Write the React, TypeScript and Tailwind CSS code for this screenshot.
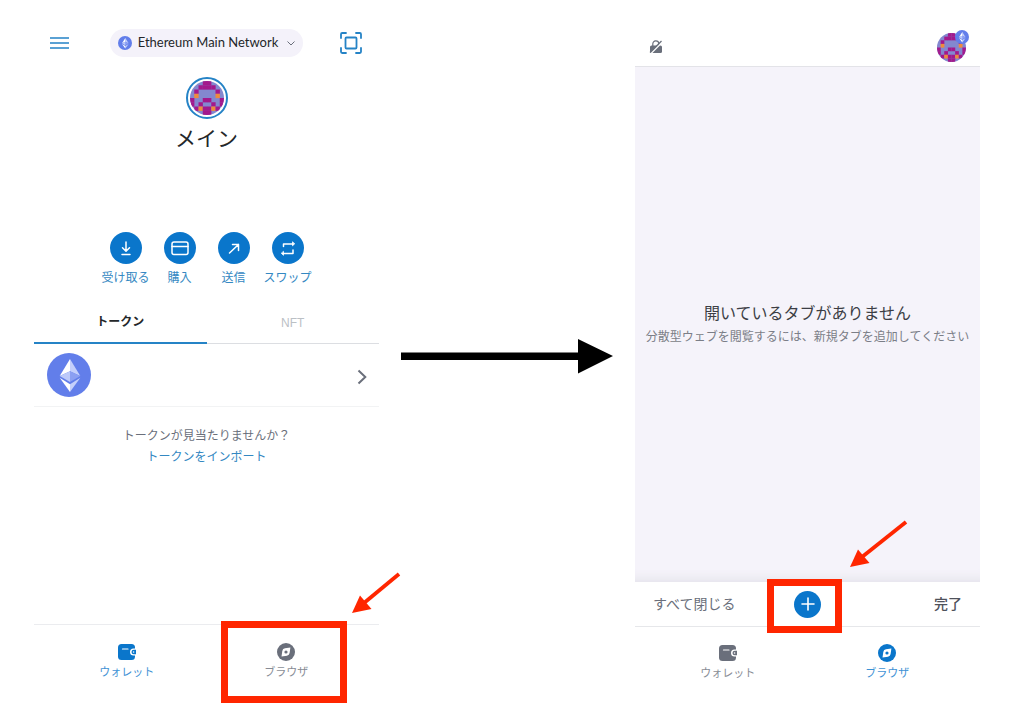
import type { ReactNode } from "react";

const AVATAR_ROWS = [
  "...mm...",
  "..mmmm..",
  ".m....m.",
  ".o....o.",
  "m..mm..m",
  "m.m..m.m",
  ".mommom.",
  "...mm...",
];

function Blockie({ className }: { className: string }) {
  return (
    <svg viewBox="0 0 8 8" className={className} aria-hidden="true">
      <rect width="8" height="8" fill="#8388cf" />
      {AVATAR_ROWS.flatMap((row, y) =>
        row.split("").map((cell, x) =>
          cell === "." ? null : (
            <rect key={`${x}-${y}`} x={x} y={y} width="1.03" height="1.03" fill={cell === "m" ? "#a3198c" : "#f08a3c"} />
          ),
        ),
      )}
    </svg>
  );
}

function EthLogo({ className }: { className: string }) {
  return (
    <svg viewBox="0 0 44 44" className={className} aria-hidden="true">
      <circle cx="22" cy="22" r="22" fill="#627eea" />
      <path d="M23 6v12.3l10.3 4.6z" fill="#c4cffb" />
      <path d="M23 6L12.7 22.9 23 18.3z" fill="#fff" />
      <path d="M23 18.3v10.8l10.3-6.2z" fill="#8b9ff2" />
      <path d="M12.7 22.9L23 29.1V18.3z" fill="#bcc9fa" />
      <path d="M23 31.2V39l10.3-14.2z" fill="#c4cffb" />
      <path d="M23 39v-7.8l-10.3-6.4z" fill="#fff" />
    </svg>
  );
}

function WalletIcon() {
  return (
    <svg viewBox="0 0 18 16" className="h-4 w-[18px]" aria-hidden="true">
      <rect width="17" height="16" rx="3.5" fill="currentColor" />
      <path d="M4.5 5h5.5" stroke="#fff" strokeWidth="1.2" strokeLinecap="round" />
      <path d="M18 4.4h-2.4a3.6 3.6 0 0 0 0 7.2H18z" fill="#fff" />
      <path d="M18 5.7h-2.200a2.300 2.300 0 0 0 0 4.600H18z" fill="currentColor" />
      <circle cx="15.600" cy="8" r="0.800" fill="#fff" />
    </svg>
  );
}

function CompassIcon() {
  return (
    <svg viewBox="0 0 18 18" className="size-[18px]" aria-hidden="true">
      <circle cx="9" cy="9" r="9" fill="currentColor" />
      <path d="M13.4 4.500L8 5.300A3.200 3.200 0 0 0 5.300 8l-.8 5.500 5.500-.8a3.200 3.200 0 0 0 2.600-2.700z" fill="#fff" />
      <circle cx="9" cy="9" r="1.600" fill="currentColor" />
    </svg>
  );
}

function RedArrow({ dx, dy, className }: { dx: number; dy: number; className: string }) {
  return (
    <svg width={dx + 2} height={dy + 2} viewBox={`0 0 ${dx + 2} ${dy + 2}`} className={className} aria-hidden="true">
      <path d={`M12 ${dy - 9}L${dx} 2`} stroke="#ff2600" strokeWidth="3.8" fill="none" />
      <path d={`M0 ${dy + 1}l8-17.500 11.500 13.500z`} fill="#ff2600" />
    </svg>
  );
}

function Action({ label, children }: { label: string; children: ReactNode }) {
  return (
    <button type="button" className="flex w-[54px] flex-col items-center gap-1.5 whitespace-nowrap text-xs text-[#3488c2]">
      <span className="flex size-8 items-center justify-center rounded-full bg-[#0a76cb]">
        <svg
          viewBox="0 0 20 20"
          className="size-5"
          fill="none"
          stroke="#fff"
          strokeWidth="1.5"
          strokeLinecap="round"
          strokeLinejoin="round"
          aria-hidden="true"
        >
          {children}
        </svg>
      </span>
      {label}
    </button>
  );
}

function NavButton({ label, active, icon, children }: { label: string; active?: boolean; icon: ReactNode; children?: ReactNode }) {
  return (
    <button
      type="button"
      className={`relative flex flex-1 flex-col items-center gap-0.5 text-[11px] leading-4 ${active ? "text-[#0a76cb]" : "text-[#6a6f7b]"}`}
    >
      <span className="flex h-5 items-center">{icon}</span>
      <span className="opacity-80">{label}</span>
      {children}
    </button>
  );
}

function WalletScreen() {
  return (
    <section className="flex min-w-0 flex-col">
      <header className="flex items-center justify-between pt-[29px] pr-4 pl-4">
        <button type="button" aria-label="メニュー" className="flex h-7 w-6 items-center">
          <svg viewBox="0 0 20 12" className="h-3 w-5" stroke="#2583c6" strokeWidth="1.6" aria-hidden="true">
            <path d="M0 1h19M0 6h19M0 11h19" />
          </svg>
        </button>
        <button type="button" className="flex h-7 items-center rounded-full bg-[#f4f2fa] px-2 text-[13px] text-[#24272a]">
          <EthLogo className="size-[14px]" />
          <span className="ml-[6px] font-['Lato',sans-serif] whitespace-nowrap">Ethereum Main Network</span>
          <svg viewBox="0 0 8 5" className="ml-[9px] h-[5px] w-2" fill="none" stroke="#6a6f7b" strokeWidth="1" aria-hidden="true">
            <path d="M.5.5L4 4 7.500.5" />
          </svg>
        </button>
        <button type="button" aria-label="スキャン" className="flex size-6 items-center justify-center">
          <svg viewBox="0 0 22 22" className="size-[22px]" fill="none" stroke="#2583c6" strokeWidth="1.8" strokeLinecap="round" aria-hidden="true">
            <path d="M1 6V2.200Q1 1 2.200 1H6M16 1h3.800Q21 1 21 2.200V6M21 16v3.800q0 1.200-1.200 1.200H16M6 21H2.200Q1 21 1 19.800V16" />
            <rect x="5.500" y="5.500" width="11" height="11" rx="1" />
          </svg>
        </button>
      </header>

      <div className="mt-5 flex flex-col items-center">
        <div className="flex size-[42px] items-center justify-center rounded-full border-2 border-[#2583c6]">
          <Blockie className="size-[34px] rounded-full" />
        </div>
        <h1 className="mt-1 text-[21px] leading-8 text-[#24272a]">メイン</h1>
      </div>

      <div className="mt-[77px] flex justify-center">
        <Action label="受け取る">
          <path d="M10 4v9M6.500 9.800L10 13.300l3.500-3.500M6 16.500h8" />
        </Action>
        <Action label="購入">
          <rect x="2" y="4" width="16" height="12.500" rx="2" />
          <path d="M2 8.500h16" />
        </Action>
        <Action label="送信">
          <path d="M5.500 15L14.500 6.500M8.500 6.500h6v6" />
        </Action>
        <Action label="スワップ">
          <path d="M5.500 8.500V6H15M5 15.500H15V12" />
          <path d="M14.500 4.200V7.800L16.500 6zM5.500 13.700v3.600L3.500 15.500z" fill="#fff" strokeWidth="0.800" />
        </Action>
      </div>

      <div role="tablist" className="mt-[18px] flex text-xs">
        <button type="button" role="tab" aria-selected="true" className="h-10 flex-1 border-b-2 border-[#2583c6] pb-0.5 font-bold text-[#24272a]">
          トークン
        </button>
        <button type="button" role="tab" aria-selected="false" className="h-10 flex-1 border-b border-[#dcdee2] pb-0.5 text-[#bbc0c5]">
          NFT
        </button>
      </div>

      <button type="button" aria-label="Ethereum" className="flex h-[63px] items-center justify-between border-b border-[#f2f3f4] pr-3 pl-[13px]">
        <EthLogo className="size-[44px]" />
        <svg viewBox="0 0 10 16" className="mt-1 h-4 w-[10px]" fill="none" stroke="#6a6f7b" strokeWidth="2" aria-hidden="true">
          <path d="M1.500 1.500L8.300 8l-6.800 6.500" />
        </svg>
      </button>

      <div className="mt-[19px] flex flex-col items-center text-xs leading-[21px]">
        <p className="text-[#6a6f7b]">トークンが見当たりませんか？</p>
        <a href="#import" className="text-[#3488c2]">
          トークンをインポート
        </a>
      </div>

      <nav className="mt-auto flex border-t border-[#ebecef] px-[13px] pt-[17px] pb-7">
        <NavButton label="ウォレット" active icon={<WalletIcon />} />
        <NavButton label="ブラウザ" icon={<CompassIcon />}>
          <span className="pointer-events-none absolute -top-[21px] left-[14px] h-[82px] w-[126px] border-[7px] border-[#ff2600]" />
          <RedArrow dx={47} dy={40} className="pointer-events-none absolute -top-[70px] left-[145px] max-w-none" />
        </NavButton>
      </nav>
    </section>
  );
}

function BrowserScreen() {
  return (
    <section className="flex min-w-0 flex-col">
      <header className="flex h-[67px] items-end justify-between border-b border-[#e3e3e8] pr-[14px] pl-[14px]">
        <svg viewBox="0 0 14 14" className="mb-3 size-[14px]" fill="none" aria-hidden="true">
          <path d="M3.800 6V4a3 3 0 0 1 6-.3V6" stroke="#6a6f7b" strokeWidth="1.200" />
          <rect x="1" y="5.500" width="12" height="7.500" rx="1.500" fill="#6a6f7b" />
          <path d="M2 13.500L13.500 2" stroke="#fff" strokeWidth="1.200" />
          <path d="M1 12.500L12.500 1" stroke="#6a6f7b" strokeWidth="1.200" />
        </svg>
        <button type="button" aria-label="アカウント" className="relative mb-1">
          <Blockie className="size-[29px] rounded-full" />
          <EthLogo className="absolute -top-[3px] -right-[3px] size-[14px]" />
        </button>
      </header>

      <div className="flex flex-1 flex-col items-center justify-center bg-[#f5f3fa] shadow-[inset_0_-14px_12px_-12px_#e2e0e8]">
        <h2 className="text-base leading-6 text-[#3c3e45]">開いているタブがありません</h2>
        <p className="text-xs leading-[22px] whitespace-nowrap text-[#7b7e87]">
          分散型ウェブを閲覧するには、新規タブを追加してください
        </p>
      </div>

      <div className="grid h-[45px] grid-cols-3 items-center border-b border-[#e6e7ea] px-[18px] text-sm">
        <button type="button" className="justify-self-start whitespace-nowrap text-[#6a6f7b]">
          すべて閉じる
        </button>
        <button
          type="button"
          aria-label="新規タブ"
          className="relative flex size-[27px] items-center justify-center justify-self-center rounded-full bg-[#0a76cb]"
        >
          <svg viewBox="0 0 14 14" className="size-[14px]" stroke="#fff" strokeWidth="1.600" strokeLinecap="round" aria-hidden="true">
            <path d="M7 1v12M1 7h12" />
          </svg>
          <span className="pointer-events-none absolute -top-3 -left-[27px] h-[54px] w-[75px] border-[7px] border-[#ff2600]" />
          <RedArrow dx={56} dy={46} className="pointer-events-none absolute -top-[71px] left-[56px] max-w-none" />
        </button>
        <button type="button" className="justify-self-end font-medium text-[#4f525b]">
          完了
        </button>
      </div>

      <nav className="flex px-[13px] pt-4 pb-[27px]">
        <NavButton label="ウォレット" icon={<WalletIcon />} />
        <NavButton label="ブラウザ" active icon={<CompassIcon />} />
      </nav>
    </section>
  );
}

export default function App() {
  return (
    <main className="grid min-h-screen grid-cols-[1fr_256px_1fr] bg-white pr-11 pl-[34px] font-['Liberation_Sans','Noto_Sans_CJK_JP',sans-serif]">
      <WalletScreen />
      <div className="flex items-center justify-center pt-1">
        <svg viewBox="0 0 212 36" className="h-9 w-[212px]" aria-hidden="true">
          <path d="M0 14.500h177V1l35 17-35 17.500V22H0z" />
        </svg>
      </div>
      <BrowserScreen />
    </main>
  );
}
